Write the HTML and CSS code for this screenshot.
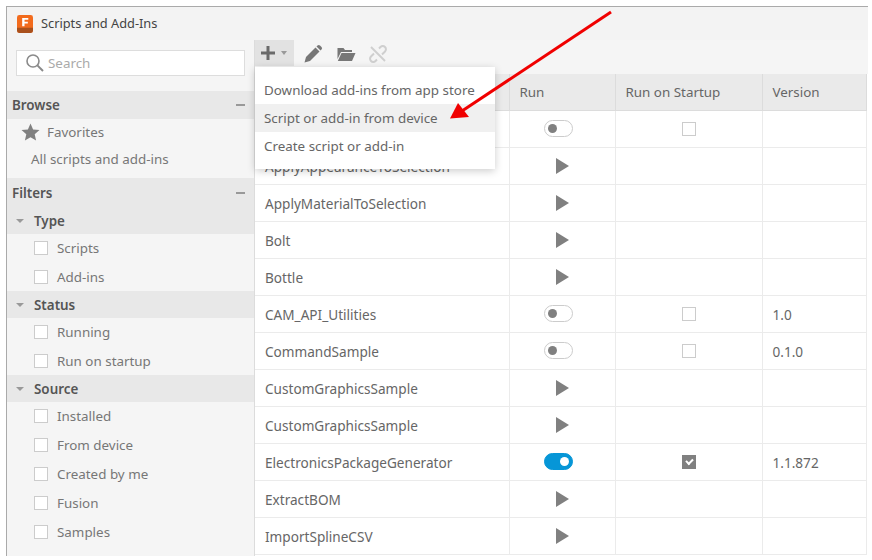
FILE: index.html
```html
<!DOCTYPE html>
<html lang="en">
<head>
    <meta charset="UTF-8">
    <meta name="viewport" content="width=device-width, initial-scale=1.0">
    <title>Scripts and Add-Ins</title>
    <link rel="stylesheet" href="styles.css">
</head>
<body>
    <div class="window">
        <div class="titlebar">
            <svg class="logo" width="16" height="18" viewBox="0 0 17 19">
                <rect width="17" height="19" rx="2.5" fill="#f26b1d"/>
                <path d="M0 13.5h17V16.5a2.5 2.5 0 0 1-2.5 2.5H2.5A2.5 2.5 0 0 1 0 16.5z" fill="#a9501c"/>
                <path d="M5.5 3h6.5v2H8v2h3.5v2H8v3H5.5z" fill="#fff"/>
            </svg>
            <span class="title">Scripts and Add-Ins</span>
        </div>
        <div class="content">
            <div class="sidebar">
                <div class="search">
                    <svg width="20" height="20" viewBox="0 0 20 20">
                        <circle cx="8" cy="8" r="6" fill="none" stroke="#8a8a8a" stroke-width="1.6"/>
                        <path d="M12.4 12.4l5.6 5.6" stroke="#8a8a8a" stroke-width="2"/>
                    </svg>
                    <span class="search-text">Search</span>
                </div>
                <div class="section-head">Browse<span class="minus"></span></div>
                <div class="browse-item">
                    <svg width="19" height="18" viewBox="0 0 19 18">
                        <path d="M9.5 0.5l2.6 5.9 6.4 0.6-4.8 4.2 1.4 6.3-5.6-3.3-5.6 3.3 1.4-6.3L0.500 7l6.400-0.600z" fill="#808080"/>
                    </svg>
                    Favorites
                </div>
                <div class="browse-item all">All scripts and add-ins</div>

                <div class="section-head filters">Filters<span class="minus"></span></div>
                <div class="group-head"><span class="caret"></span>Type</div>
                <div class="filter-list">
                    <label class="filter"><span class="box"></span>Scripts</label>
                    <label class="filter"><span class="box"></span>Add-ins</label>
                </div>
                <div class="group-head"><span class="caret"></span>Status</div>
                <div class="filter-list">
                    <label class="filter"><span class="box"></span>Running</label>
                    <label class="filter"><span class="box"></span>Run on startup</label>
                </div>
                <div class="group-head"><span class="caret"></span>Source</div>
                <div class="filter-list">
                    <label class="filter"><span class="box"></span>Installed</label>
                    <label class="filter"><span class="box"></span>From device</label>
                    <label class="filter"><span class="box"></span>Created by me</label>
                    <label class="filter"><span class="box"></span>Fusion</label>
                    <label class="filter"><span class="box"></span>Samples</label>
                </div>
            </div>

            <div class="main">
                <div class="toolbar">
                    <div class="add-btn">
                        <svg width="16" height="16" viewBox="0 0 16 16"><path d="M6.500 1h3v5.500H15v3H9.500V15h-3V9.500H1v-3h5.500z" fill="#6a6a6a"/></svg>
                        <span class="caret small"></span>
                    </div>
                    <svg class="tool pencil" width="20" height="20" viewBox="0 0 20 20">
                        <path d="M1.500 18.500l1.500-5.500L12.500 3.500l4 4L7 17z" fill="#777"/>
                        <path d="M13.500 2.500l1-1a1.800 1.800 0 0 1 2.500 0l1.500 1.500a1.800 1.800 0 0 1 0 2.500l-1 1z" fill="#777"/>
                    </svg>
                    <svg class="tool" width="19" height="16" viewBox="0 0 19 16">
                        <path d="M0.500 2h6l1.500 2h7v2H4L0.500 13z" fill="#777"/>
                        <path d="M4.500 7h14l-3.500 8H0.800z" fill="#777"/>
                    </svg>
                    <svg class="tool" width="18" height="18" viewBox="0 0 18 18" fill="none" stroke="#cfcfcf" stroke-width="2">
                        <path d="M10 3.500l1.500-1.500a3 3 0 0 1 4.500 4.500l-3 3"/>
                        <path d="M8 14.500l-1.500 1.500a3 3 0 0 1-4.500-4.500l3-3"/>
                        <path d="M2 2l14 14"/>
                    </svg>
                </div>

                <table class="grid">
                    <thead>
                        <tr><th class="c-name"></th><th class="c-run">Run</th><th class="c-start">Run on Startup</th><th>Version</th></tr>
                    </thead>
                    <tbody>
                        <tr><td></td><td class="mid"><span class="toggle"></span></td><td class="mid"><span class="box"></span></td><td></td></tr>
                        <tr><td>ApplyAppearanceToSelection</td><td class="mid"><span class="play"></span></td><td></td><td></td></tr>
                        <tr><td>ApplyMaterialToSelection</td><td class="mid"><span class="play"></span></td><td></td><td></td></tr>
                        <tr><td>Bolt</td><td class="mid"><span class="play"></span></td><td></td><td></td></tr>
                        <tr><td>Bottle</td><td class="mid"><span class="play"></span></td><td></td><td></td></tr>
                        <tr><td>CAM_API_Utilities</td><td class="mid"><span class="toggle"></span></td><td class="mid"><span class="box"></span></td><td>1.0</td></tr>
                        <tr><td>CommandSample</td><td class="mid"><span class="toggle"></span></td><td class="mid"><span class="box"></span></td><td>0.1.0</td></tr>
                        <tr><td>CustomGraphicsSample</td><td class="mid"><span class="play"></span></td><td></td><td></td></tr>
                        <tr><td>CustomGraphicsSample</td><td class="mid"><span class="play"></span></td><td></td><td></td></tr>
                        <tr><td>ElectronicsPackageGenerator</td><td class="mid"><span class="toggle on"></span></td><td class="mid"><span class="box checked"></span></td><td>1.1.872</td></tr>
                        <tr><td>ExtractBOM</td><td class="mid"><span class="play"></span></td><td></td><td></td></tr>
                        <tr><td>ImportSplineCSV</td><td class="mid"><span class="play"></span></td><td></td><td></td></tr>
                    </tbody>
                </table>

                <div class="menu">
                    <div class="menu-item">Download add-ins from app store</div>
                    <div class="menu-item active">Script or add-in from device</div>
                    <div class="menu-item">Create script or add-in</div>
                </div>
            </div>
        </div>
    </div>

    <svg class="arrow" width="872" height="560" viewBox="0 0 872 560">
        <path d="M611 12L462 111" stroke="#f00000" stroke-width="3" fill="none"/>
        <path d="M450 118.500L458 103L469 117z" fill="#f00000"/>
    </svg>
</body>
</html>
```

FILE: styles.css
```css
html, body {
    margin: 0;
    height: 100%;
    overflow: hidden;
}
body {
    background-color: #fff;
    font-family: "Noto Sans", Arial, sans-serif;
    font-size: 13.4px;
    color: #666;
    padding: 6px 4px 5px 6px;
    box-sizing: border-box;
}
.window {
    height: 549px;
    border-top: 1px solid #aaa;
    border-left: 1px solid #aaa;
    background-color: #f5f5f5;
    display: flex;
    flex-direction: column;
    overflow: hidden;
}
.titlebar {
    height: 33px;
    flex: none;
    background-color: #f3f3f3;
    display: flex;
    align-items: center;
    padding-left: 10px;
    gap: 8px;
    font-size: 12.8px;
    color: #444;
}
.title {
    padding-bottom: 1px;
}
.content {
    flex: 1;
    display: flex;
    min-height: 0;
}

/* left panel */
.sidebar {
    width: 247px;
    flex: none;
    border-right: 1px solid #dcdcdc;
    background-color: #f5f5f5;
}
.search {
    height: 24px;
    margin: 10px 9px 15px 9px;
    border: 1px solid #ddd;
    background-color: #fff;
    display: flex;
    align-items: center;
    padding-left: 8px;
    gap: 3px;
    color: #aaa;
}
.search-text {
    padding-bottom: 1px;
}
.section-head {
    height: 28px;
    background-color: #e8e8e8;
    display: flex;
    align-items: center;
    justify-content: space-between;
    padding: 0 9px 0 5px;
    font-weight: 600;
    color: #555;
}
.section-head.filters {
    margin-top: 5px;
    height: 29px;
}
.minus {
    width: 9px;
    height: 2px;
    background-color: #999;
}
.browse-item {
    height: 27px;
    box-sizing: border-box;
    padding: 0 0 2px 14px;
    display: flex;
    align-items: center;
    gap: 7px;
    color: #777;
}
.browse-item.all {
    padding-left: 24px;
}
.group-head {
    height: 27px;
    background-color: #e8e8e8;
    display: flex;
    align-items: center;
    padding-left: 9px;
    font-weight: 600;
    color: #555;
}
.caret {
    width: 0;
    height: 0;
    border-left: 4px solid transparent;
    border-right: 4px solid transparent;
    border-top: 4px solid #999;
    margin-right: 10px;
}
.caret.small {
    margin: 0;
    border-left-width: 3.500px;
    border-right-width: 3.500px;
}
.filter-list {
    margin-top: -1px;
    padding-left: 27px;
}
.filter {
    height: 29px;
    display: flex;
    align-items: center;
    gap: 9px;
    color: #777;
}
.box {
    display: inline-block;
    width: 12px;
    height: 12px;
    border: 1px solid #ccc;
    background-color: #fff;
    vertical-align: middle;
}
.box.checked {
    border-color: #808080;
    background-color: #808080;
    position: relative;
}
.box.checked::after {
    content: "";
    position: absolute;
    left: 3px;
    top: 1px;
    width: 5px;
    height: 3px;
    border-left: 2px solid #fff;
    border-bottom: 2px solid #fff;
    transform: rotate(-45deg) translate(-1px, 1px);
}

/* toolbar and table */
.main {
    flex: 1;
    min-width: 0;
    position: relative;
    background-color: #fff;
}
.toolbar {
    height: 34px;
    background-color: #f5f5f5;
    display: flex;
    align-items: center;
    gap: 13px;
}
.add-btn {
    width: 39px;
    height: 26px;
    margin-top: -8px;
    padding-left: 5px;
    box-sizing: border-box;
    background-color: #e2e2e2;
    display: flex;
    align-items: center;
    gap: 5px;
}
.tool {
    margin-top: -7px;
}
.tool.pencil {
    margin-left: -4px;
    margin-right: 1px;
}
.grid {
    width: 612px;
    border-collapse: collapse;
    table-layout: fixed;
}
.grid th {
    height: 36px;
    box-sizing: border-box;
    padding: 0 0 0 10px;
    background-color: #eaeaea;
    border-right: 1px solid #dcdcdc;
    border-bottom: 1px solid #dcdcdc;
    text-align: left;
    font-weight: 400;
    color: #666;
}
.grid td {
    height: 37px;
    box-sizing: border-box;
    padding: 1px 0 0 10px;
    border-right: 1px solid #ebebeb;
    border-bottom: 1px solid #ebebeb;
    font-size: 13.6px;
    color: #666;
}
.grid td.mid {
    padding: 0;
    text-align: center;
    font-size: 0;
}
.c-name { width: 254px; }
.c-run { width: 106px; }
.c-start { width: 147px; }
.toggle {
    display: inline-block;
    width: 29px;
    height: 17px;
    margin-right: 8px;
    box-sizing: border-box;
    border: 1px solid #ccc;
    border-radius: 9px;
    background-color: #fff;
    position: relative;
    vertical-align: middle;
}
.toggle::after {
    content: "";
    position: absolute;
    left: 3px;
    top: 3px;
    width: 9px;
    height: 9px;
    border-radius: 50%;
    background-color: #808080;
}
.toggle.on {
    background-color: #0696d7;
    border-color: #0696d7;
}
.toggle.on::after {
    left: auto;
    right: 3px;
    background-color: #fff;
}
.play {
    display: inline-block;
    width: 0;
    height: 0;
    border-left: 13px solid #808080;
    border-top: 8px solid transparent;
    border-bottom: 8px solid transparent;
    vertical-align: middle;
}

/* dropdown over the table */
.menu {
    position: absolute;
    left: 0;
    top: 27px;
    width: 240px;
    padding: 9px 0;
    background-color: #fff;
    box-shadow: 0 2px 8px rgba(0, 0, 0, 0.2);
}
.menu-item {
    height: 28px;
    display: flex;
    align-items: center;
    padding-left: 9px;
    color: #666;
}
.menu-item.active {
    background-color: #f0f0f0;
}
.arrow {
    position: absolute;
    left: 0;
    top: 0;
    pointer-events: none;
}
```
